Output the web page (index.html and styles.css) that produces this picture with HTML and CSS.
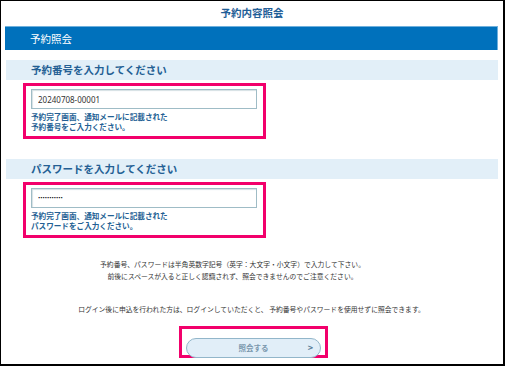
FILE: index.html
```html
<!DOCTYPE html>
<html lang="ja">
<head>
    <meta charset="UTF-8">
    <meta name="viewport" content="width=device-width, initial-scale=1.0">
    <title>予約内容照会</title>
    <link rel="stylesheet" href="styles.css">
</head>
<body>

    <!-- Page frame -->
    <div class="frame">
        <h1 class="page-title">予約内容照会</h1>

        <div class="main">
            <div class="bar">予約照会</div>

            <!-- Reservation number -->
            <div class="field-head">予約番号を入力してください</div>
            <div class="highlight field-box">
                <input type="text" class="text-input" value="20240708-00001">
                <p class="help">予約完了画面、通知メールに記載された<br>予約番号をご入力ください。</p>
            </div>

            <!-- Password -->
            <div class="field-head second">パスワードを入力してください</div>
            <div class="highlight field-box">
                <input type="password" class="text-input pass" value="12345678901">
                <p class="help">予約完了画面、通知メールに記載された<br>パスワードをご入力ください。</p>
            </div>

            <p class="note">予約番号、パスワードは半角英数字記号（英字：大文字・小文字）で入力して下さい。<br>前後にスペースが入ると正しく認識されず、照会できませんのでご注意ください。</p>

            <p class="note login">ログイン後に申込を行われた方は、ログインしていただくと、 予約番号やパスワードを使用せずに照会できます。</p>

            <div class="btn-row">
                <div class="highlight btn-box">
                    <button class="submit-btn">照会する<span class="arrow">&gt;</span></button>
                </div>
            </div>
        </div>
    </div>

</body>
</html>
```

FILE: styles.css
```css
body {
    margin: 0;
    font-family: "Noto Sans CJK JP", "Noto Sans", sans-serif;
    background-color: #fff;
}
.frame {
    box-sizing: border-box;
    width: 505px;
    height: 366px;
    border-style: solid;
    border-color: #000;
    border-width: 1px 2px 2px 1px;
    overflow: hidden;
}
.page-title {
    margin: 0;
    height: 25px;
    line-height: 24px;
    text-align: center;
    font-size: 10.5px;
    font-weight: bold;
    color: #1f5e97;
}
.main {
    padding: 0 5px 0 4px;
}
.bar {
    box-sizing: border-box;
    height: 24px;
    line-height: 23px;
    padding-left: 25px;
    background-color: #0071bc;
    border-top: 1px solid #6fb0dc;
    border-right: 1px solid #6fb0dc;
    color: #fff;
    font-size: 10.5px;
}
.field-head {
    margin-top: 10px;
    margin-left: 1px;
    height: 20px;
    line-height: 20px;
    padding-left: 25px;
    background-color: #e2eff8;
    color: #245f94;
    font-size: 10.5px;
    font-weight: bold;
}
.field-head.second {
    margin-top: 20px;
}
.highlight {
    border: 3px solid #f2006b;
}
.field-box {
    box-sizing: border-box;
    width: 243px;
    height: 56px;
    margin: 3px 0 0 18px;
    padding: 3px 5px 0 5px;
}
.text-input {
    box-sizing: border-box;
    display: block;
    width: 226px;
    height: 20px;
    margin: 0;
    padding: 0 6px;
    border: 1px solid #9fbcc6;
    box-shadow: inset 1px 1px 1px #d5e0e4;
    font-family: "Noto Sans", sans-serif;
    font-size: 8px;
    color: #333;
    outline: none;
}
.text-input.pass {
    font-size: 6px;
    letter-spacing: 0;
    color: #111;
}
.help {
    margin: 3px 0 0 0;
    font-size: 7.6px;
    font-weight: bold;
    line-height: 10px;
    color: #245f94;
}
.note {
    margin: 20px 0 0 0;
    padding-right: 38px;
    text-align: center;
    font-size: 6.8px;
    line-height: 12px;
    color: #333;
}
.note.login {
    margin-top: 21px;
    padding-right: 0;
}
.btn-row {
    display: flex;
    justify-content: flex-start;
    margin-top: 11px;
    padding-left: 174px;
}
.btn-box {
    box-sizing: border-box;
    width: 149px;
    height: 32px;
    padding: 3px 4px;
}
.submit-btn {
    position: relative;
    box-sizing: border-box;
    width: 135px;
    height: 20px;
    margin: 0;
    padding: 0;
    border: 1px solid #92b6ca;
    border-radius: 10px;
    background-color: #e1eef8;
    color: #7a97ad;
    font-family: "Noto Sans CJK JP", sans-serif;
    font-size: 7.5px;
    font-weight: bold;
}
.arrow {
    position: absolute;
    right: 7px;
    top: 3px;
    font-size: 9px;
    line-height: 12px;
    color: #5a7f9a;
}
```
